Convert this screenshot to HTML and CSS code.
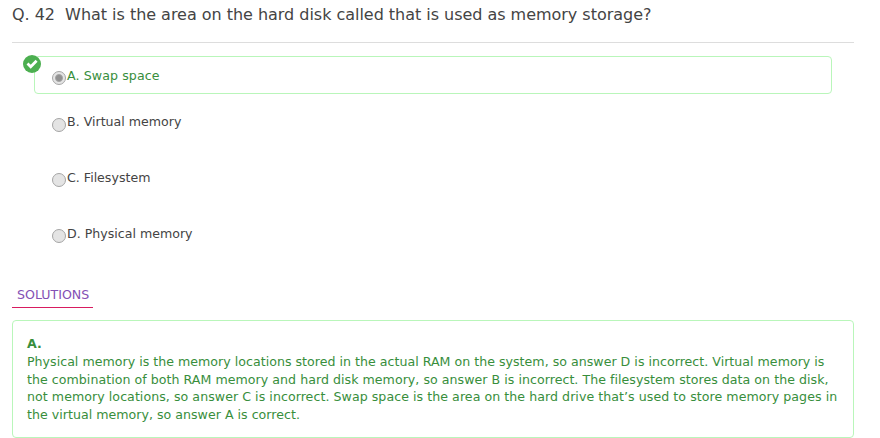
FILE: index.html
```html
<!DOCTYPE html>
<html lang="en">
<head>
<meta charset="utf-8">
<title>Question 42</title>
<link rel="stylesheet" href="styles.css">
</head>
<body>
<main class="question">
  <h1 class="question-title">Q. 42&nbsp; What is the area on the hard disk called that is used as memory storage?</h1>
  <div class="options">
    <div class="option correct">
      <svg class="badge" viewBox="0 0 18 18"><circle cx="9" cy="9" r="9" fill="#4caf50"/><path d="M4.5 8.6 7.7 11.7 13.6 5.8" fill="none" stroke="#fff" stroke-width="2.8"/></svg>
      <span class="radio checked"></span><span class="label">A. Swap space</span>
    </div>
    <div class="option"><span class="radio low"></span><span class="label">B. Virtual memory</span></div>
    <div class="option"><span class="radio"></span><span class="label">C. Filesystem</span></div>
    <div class="option"><span class="radio"></span><span class="label">D. Physical memory</span></div>
  </div>
  <h2 class="solutions-title">SOLUTIONS</h2>
  <section class="solution">
    <strong>A.</strong><br>
    <span class="snug">Physical memory is the memory locations stored in the actual RAM on the system, so answer D is incorrect. Virtual memory is</span><br>
    the combination of both RAM memory and hard disk memory, so answer B is incorrect. The filesystem stores data on the disk,<br>
    <span class="loose">not memory locations, so answer C is incorrect. Swap space is the area on the hard drive that’s used to store memory pages in</span><br>
    <span class="snug">the virtual memory, so answer A is correct.</span>
  </section>
</main>
</body>
</html>
```
FILE: styles.css
```css
* { box-sizing: border-box; }
body { margin: 0; background: #fff; color: #444; font: 12.6px/18px "DejaVu Sans", sans-serif; overflow: hidden; }
.question { width: 842px; margin-left: 12px; }
.question-title { margin: 0; height: 43px; padding-top: 5px; border-bottom: 1px solid #ddd; font-size: 16px; line-height: 20px; font-weight: 400; white-space: nowrap; letter-spacing: -0.027px; }
.options { padding: 13px 22px 0; }
.option { position: relative; display: flex; height: 38px; padding: 10px 0 0 17px; margin-bottom: 18px; border: 1px solid transparent; border-radius: 4px; }
.option.correct { border-color: #b9f6ba; color: #388e3c; margin-bottom: 8px; }
.option.correct .label { letter-spacing: 0.1px; }
.badge { position: absolute; left: -12px; top: -2px; width: 18px; height: 18px; margin-top: -0.5px; }
.radio { width: 14px; height: 14px; margin: 4px 1px 0 0; border: 1px solid #a5a5a5; border-radius: 50%; background: #e4e4e4; }
.radio.low { margin-top: 5px; }
.radio.checked { background: radial-gradient(circle, #919191 0 2.6px, #aaa 3.6px, #e4e4e4 4.4px); }
.label { white-space: nowrap; }
.solutions-title { display: block; width: 81px; height: 24px; margin: 32px 0 0; padding: 0 5px; border-bottom: 1px solid #d81b60; color: #8450b5; font-size: 12.6px; line-height: 22px; font-weight: 400; }
.solution { height: 118px; margin-top: 12px; padding: 14px; border: 1px solid #b9f6ba; border-radius: 4px; color: #388e3c; white-space: nowrap; line-height: 17.8px; letter-spacing: 0.037px; }
.snug { letter-spacing: 0.019px; }
.loose { letter-spacing: 0.052px; }
```
